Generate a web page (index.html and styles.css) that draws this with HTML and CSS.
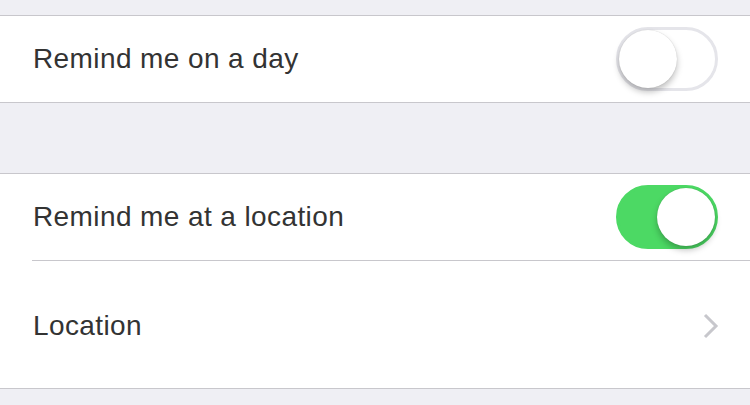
FILE: index.html
```html
<!DOCTYPE html>
<html lang="en">
<head>
<meta charset="UTF-8">
<meta name="viewport" content="width=device-width, initial-scale=1.0">
<title>Reminder Details</title>
<link rel="stylesheet" href="styles.css">
</head>
<body>
    <div class="group first">
        <div class="row">
            <span class="label">Remind me on a day</span>
            <div class="switch"><div class="knob"></div></div>
        </div>
    </div>

    <div class="group">
        <div class="row">
            <span class="label">Remind me at a location</span>
            <div class="switch on"><div class="knob"></div></div>
        </div>
        <div class="row tall">
            <span class="label">Location</span>
            <svg class="chevron" width="18" height="28" viewBox="0 0 18 28">
                <path d="M3 3 L14 14 L3 25" fill="none" stroke="#c7c7cc" stroke-width="3"/>
            </svg>
        </div>
    </div>
</body>
</html>
```

FILE: styles.css
```css
body {
    margin: 0;
    background-color: #efeff4;
    font-family: "Liberation Sans", Arial, sans-serif;
    color: #333;
}

.group {
    background-color: #fff;
    border-top: 1px solid #c8c7cc;
    border-bottom: 1px solid #c8c7cc;
    margin-top: 70px;
}

.group.first {
    margin-top: 15px;
}

.row {
    height: 86px;
    display: flex;
    align-items: center;
    justify-content: space-between;
    padding: 0 32px 0 33px;
}

.row + .row {
    border-top: 1px solid #c8c7cc;
    margin-left: 32px;
    padding-left: 1px;
}

.row.tall {
    height: 125px;
    padding-top: 2px;
}

.label {
    font-size: 28px;
    letter-spacing: 0.4px;
}

.switch {
    width: 96px;
    height: 58px;
    border: 3px solid #e5e5ea;
    border-radius: 32px;
    background-color: #fff;
    display: flex;
    align-items: center;
}

.switch .knob {
    width: 58px;
    height: 58px;
    border-radius: 50%;
    background-color: #fff;
    box-shadow: 0 4px 6px rgba(0, 0, 0, 0.25), 0 0 1px rgba(0, 0, 0, 0.2);
}

.switch.on {
    background-color: #4cd964;
    border-color: #4cd964;
    justify-content: flex-end;
}

.chevron {
    margin-right: -2px;
}
```
